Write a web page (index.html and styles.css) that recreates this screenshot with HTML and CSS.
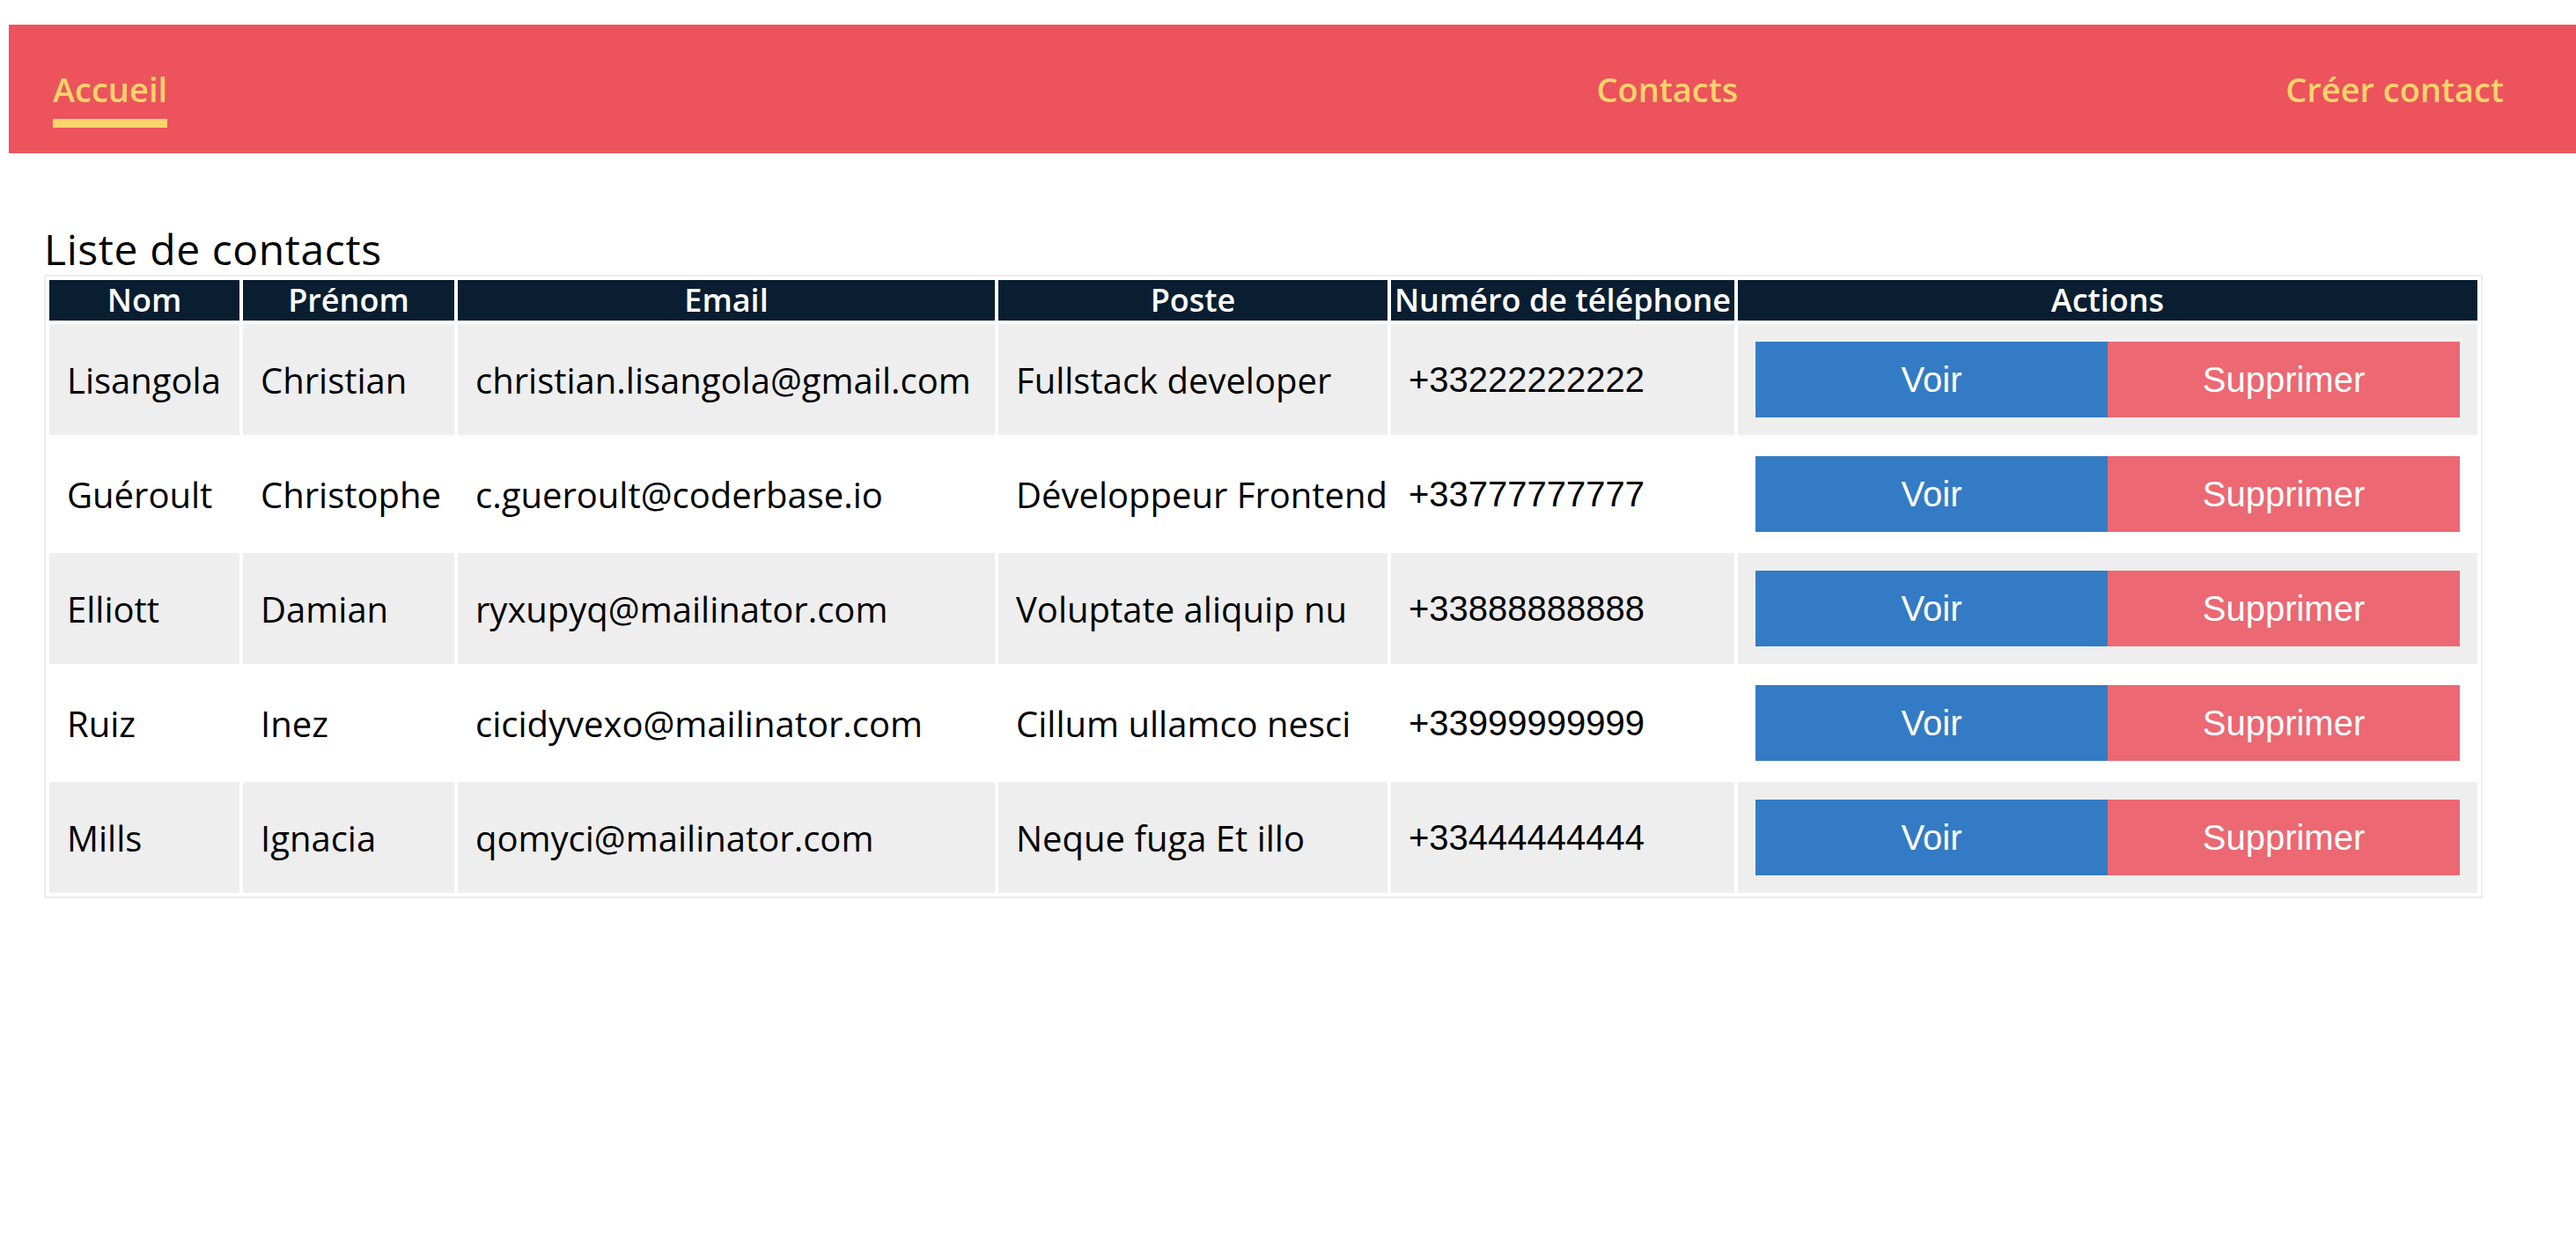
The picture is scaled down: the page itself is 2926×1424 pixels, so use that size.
FILE: index.html
```html
<!DOCTYPE html>
<html lang="fr">
<head>
<meta charset="utf-8">
<title>Liste de contacts</title>
<link rel="stylesheet" href="styles.css">
</head>
<body>
<nav class="navbar">
  <a class="nav-link nav-link--active" href="#">Accueil</a>
  <ul class="nav-menu">
    <li><a class="nav-link" href="#">Contacts</a></li>
    <li><a class="nav-link" href="#">Créer contact</a></li>
  </ul>
</nav>
<main class="content">
  <h2 class="title">Liste de contacts</h2>
  <table class="contacts">
    <colgroup>
      <col class="col-nom">
      <col class="col-prenom">
      <col class="col-email">
      <col class="col-poste">
      <col class="col-tel">
      <col class="col-actions">
    </colgroup>
    <thead>
      <tr>
        <th>Nom</th>
        <th>Prénom</th>
        <th>Email</th>
        <th>Poste</th>
        <th>Numéro de téléphone</th>
        <th>Actions</th>
      </tr>
    </thead>
    <tbody>
      <tr>
        <td>Lisangola</td>
        <td>Christian</td>
        <td>christian.lisangola@gmail.com</td>
        <td>Fullstack developer</td>
        <td class="tel">+33222222222</td>
        <td><div class="actions"><button class="btn btn-voir">Voir</button><button class="btn btn-suppr">Supprimer</button></div></td>
      </tr>
      <tr>
        <td>Guéroult</td>
        <td>Christophe</td>
        <td>c.gueroult@coderbase.io</td>
        <td>Développeur Frontend</td>
        <td class="tel">+33777777777</td>
        <td><div class="actions"><button class="btn btn-voir">Voir</button><button class="btn btn-suppr">Supprimer</button></div></td>
      </tr>
      <tr>
        <td>Elliott</td>
        <td>Damian</td>
        <td>ryxupyq@mailinator.com</td>
        <td>Voluptate aliquip nu</td>
        <td class="tel">+33888888888</td>
        <td><div class="actions"><button class="btn btn-voir">Voir</button><button class="btn btn-suppr">Supprimer</button></div></td>
      </tr>
      <tr>
        <td>Ruiz</td>
        <td>Inez</td>
        <td>cicidyvexo@mailinator.com</td>
        <td>Cillum ullamco nesci</td>
        <td class="tel">+33999999999</td>
        <td><div class="actions"><button class="btn btn-voir">Voir</button><button class="btn btn-suppr">Supprimer</button></div></td>
      </tr>
      <tr>
        <td>Mills</td>
        <td>Ignacia</td>
        <td>qomyci@mailinator.com</td>
        <td>Neque fuga Et illo</td>
        <td class="tel">+33444444444</td>
        <td><div class="actions"><button class="btn btn-voir">Voir</button><button class="btn btn-suppr">Supprimer</button></div></td>
      </tr>
    </tbody>
  </table>
</main>
</body>
</html>
```

FILE: styles.css
```css
* { box-sizing: border-box; }

body {
  margin: 0;
  background: #ffffff;
  font-family: "Open Sans", "Noto Sans", sans-serif;
  color: #000000;
}

.navbar {
  display: flex;
  align-items: center;
  height: 146px;
  margin: 28px 0 0 10px;
  padding: 0 82px 0 50px;
  background: #ec535d;
}

.nav-menu {
  display: flex;
  align-items: center;
  gap: 622px;
  margin: 0 0 0 auto;
  padding: 0;
  list-style: none;
}

.nav-link {
  display: inline-block;
  font-family: "Open Sans", sans-serif;
  font-size: 38px;
  font-weight: 600;
  line-height: normal;
  color: #fbd46b;
  text-decoration: none;
}

.nav-link--active {
  padding: 18px 0 8px;
  border-bottom: 10px solid #f9d56e;
}

.content {
  padding: 0 0 0 50px;
}

.title {
  margin: 80px 0 0;
  font-size: 48px;
  font-weight: 500;
  line-height: 58px;
  letter-spacing: 0.6px;
  color: #000;
}

.contacts {
  table-layout: fixed;
  width: 2770px;
  border: 2px solid #ececec;
  border-spacing: 4px;
}

.col-nom { width: 216px; }
.col-prenom { width: 240px; }
.col-email { width: 610px; }
.col-poste { width: 442px; }
.col-tel { width: 390px; }
.col-actions { width: 840px; }

.contacts th {
  padding: 0;
  background: #091e30;
  color: #ffffff;
  font-size: 36px;
  font-weight: 600;
  line-height: 46px;
  text-align: center;
  white-space: nowrap;
}

.contacts td {
  padding: 20px;
  font-size: 40px;
  line-height: normal;
  text-align: left;
  white-space: nowrap;
  color: #000;
}

.contacts tbody tr:nth-child(odd) td {
  background: #eeeeee;
}

.contacts td.tel {
  font-family: "Liberation Sans", Arial, sans-serif;
}

.actions {
  display: flex;
}

.btn {
  flex: 1;
  margin: 0;
  padding: 20px 0;
  border: none;
  border-radius: 0;
  font-family: "Liberation Sans", Arial, sans-serif;
  font-size: 40px;
  line-height: 46px;
  color: #ffffff;
  cursor: pointer;
}

.btn-voir { background: #337bc4; }
.btn-suppr { background: #ec6872; }
```
